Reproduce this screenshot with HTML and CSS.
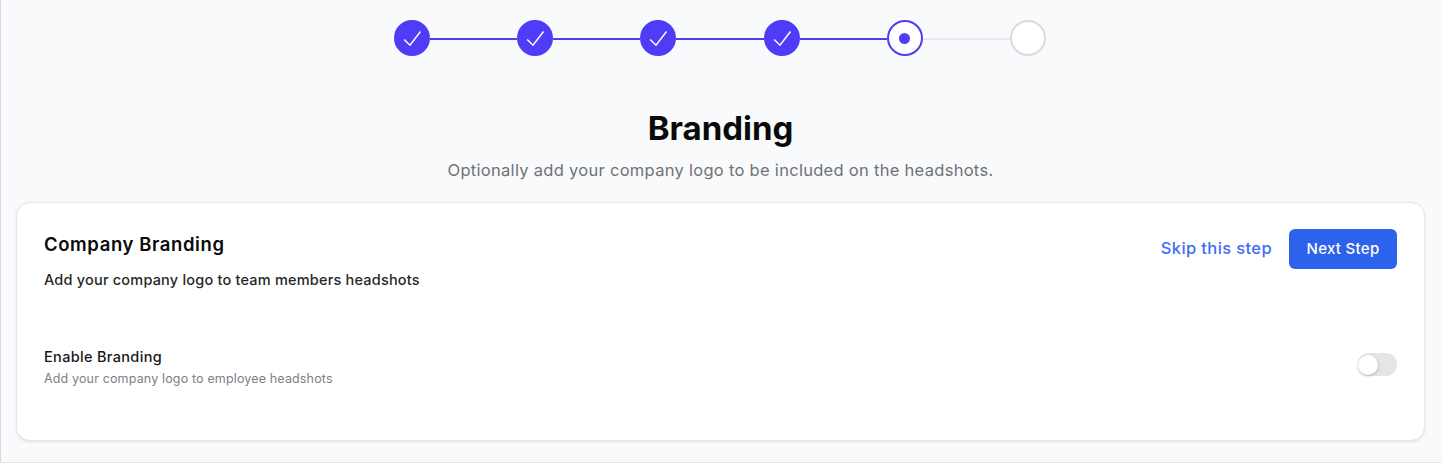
FILE: index.html

```html
<!DOCTYPE html>
<html lang="en">
<head>
<meta charset="utf-8" />
<title>Branding</title>
<link rel="stylesheet" href="styles.css">
</head>
<body>
<div class="page">
	<!-- S steps -->
	<div class="steps">
		<span class="step done"><svg viewBox="0 0 24 24" width="24" height="24"><path d="M4.2 13.5l5.8 5.7L20.5 5.5" /></svg></span>
		<span class="line done"></span>
		<span class="step done"><svg viewBox="0 0 24 24" width="24" height="24"><path d="M4.2 13.5l5.8 5.7L20.5 5.5" /></svg></span>
		<span class="line done"></span>
		<span class="step done"><svg viewBox="0 0 24 24" width="24" height="24"><path d="M4.2 13.5l5.8 5.7L20.5 5.5" /></svg></span>
		<span class="line done"></span>
		<span class="step done"><svg viewBox="0 0 24 24" width="24" height="24"><path d="M4.2 13.5l5.8 5.7L20.5 5.5" /></svg></span>
		<span class="line done"></span>
		<span class="step current"><span class="dot"></span></span>
		<span class="line"></span>
		<span class="step"></span>
	</div>
	<!-- E steps -->
	<div class="head">
		<h1>Branding</h1>
		<p>Optionally add your company logo to be included on the headshots.</p>
	</div>
	<!-- S card -->
	<div class="card">
		<div class="card_top">
			<div class="card_info">
				<h2>Company Branding</h2>
				<p class="card_desc">Add your company logo to team members headshots</p>
			</div>
			<div class="actions">
				<a href="#" class="skip">Skip this step</a>
				<button class="bt_next">Next Step</button>
			</div>
		</div>
		<div class="option">
			<div>
				<p class="option_name">Enable Branding</p>
				<p class="option_desc">Add your company logo to employee headshots</p>
			</div>
			<span class="toggle"><span class="knob"></span></span>
		</div>
	</div>
	<!-- E card -->
</div>
</body>
</html>
```

FILE: styles.css

```css
html,body{margin:0;padding:0;}
body{background-color:#F9FAFB;font-family:Inter,"Liberation Sans",sans-serif;color:#0A0A0A;}
h1,h2,p{margin:0;padding:0;}

.page{box-sizing:border-box;height:463px;padding:20px 17px 0 15px;border-left:1px solid #D9DBE0;border-bottom:1px solid #E2E4E8;overflow:hidden;}

/* S steps */
.steps{display:flex;align-items:center;width:652px;margin:0 0 0 378px;}
.step{box-sizing:border-box;display:flex;align-items:center;justify-content:center;flex:none;width:36px;height:36px;border:2px solid #D9DBE1;border-radius:50%;background-color:#FFFFFF;}
.step.done{border-color:#4F3CF7;background-color:#4F3CF7;}
.step.done svg{fill:none;stroke:#FFFFFF;stroke-width:1.5;}
.step.current{border-color:#4F3CF7;}
.step .dot{width:11px;height:11px;border-radius:50%;background-color:#4F3CF7;}
.line{flex:1;height:2px;margin-top:1px;background-color:#E8E9ED;}
.line.done{background-color:#4F3CF7;}
/* E steps */

.head{margin-top:52px;text-align:center;}
.head h1{font-size:33px;line-height:40px;font-weight:700;}
.head p{margin-top:10px;font-size:16.5px;line-height:24px;letter-spacing:0.29px;color:#6F7278;}

/* S card */
.card{box-sizing:border-box;height:239px;margin-top:20px;padding:26px 27px 0 27px;border:1px solid #E5E7EB;border-radius:14px;background-color:#FFFFFF;box-shadow:0 1px 3px rgba(0,0,0,0.1);}
.card_top{display:flex;justify-content:space-between;align-items:flex-start;}
.card_info{margin-top:1px;}
.card h2{font-size:18.5px;line-height:28px;font-weight:600;letter-spacing:0.6px;}
.card_desc{margin-top:12px;font-size:14.5px;line-height:20px;font-weight:450;letter-spacing:0.2px;color:#262626;}
.actions{display:flex;align-items:center;gap:17px;}
.skip{margin-bottom:3px;font-size:16.5px;line-height:24px;font-weight:450;letter-spacing:0.38px;color:#3F6CF6;text-decoration:none;}
.bt_next{width:108px;height:40px;padding:0 0 2px;border:0 none;border-radius:6px;background-color:#2D62EC;color:#FFFFFF;font-family:inherit;font-size:15px;font-weight:500;letter-spacing:0.3px;}
.option{display:flex;justify-content:space-between;align-items:flex-start;margin-top:57px;}
.option_name{font-size:14.5px;line-height:20px;font-weight:500;letter-spacing:0.33px;color:#171717;}
.option_desc{margin-top:4px;font-size:12.5px;line-height:16px;letter-spacing:0.15px;color:#7D8087;}
.toggle{position:relative;display:block;width:39px;height:23px;margin-top:6px;border-radius:12px;background-color:#E5E5E5;}
.toggle .knob{position:absolute;left:0;top:2px;width:20px;height:20px;border-radius:50%;background-color:#FFFFFF;box-shadow:0 1px 3px rgba(0,0,0,0.25);}
.toggle .knob:after{content:"";position:absolute;left:-8px;top:2px;z-index:-1;width:36px;height:36px;border-radius:50%;background-color:#FDFDFD;}
/* E card */
```
